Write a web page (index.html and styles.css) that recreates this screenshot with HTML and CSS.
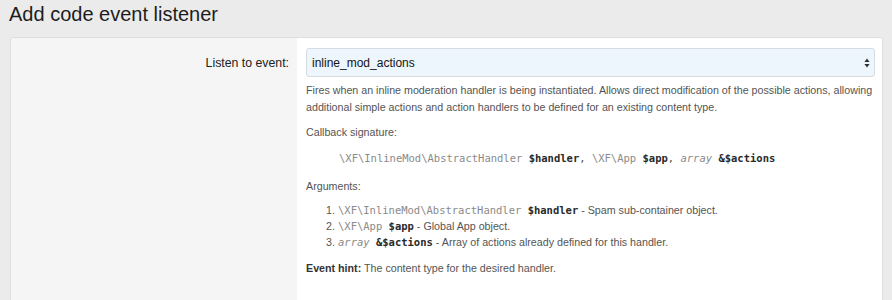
FILE: index.html
```html
<!DOCTYPE html>
<html lang="en">
<head>
<meta charset="UTF-8" />
<title>Add code event listener</title>
<link rel="stylesheet" href="styles.css">
</head>
<body>

<h1 class="page-title">Add code event listener</h1>

<div class="block">
    <div class="form-row">
        <dt class="row-label">Listen to event:</dt>
        <dd class="row-value">
            <div class="select-wrap">
                <select class="input">
                    <option>inline_mod_actions</option>
                </select>
                <svg class="select-arrow" width="6" height="10" viewBox="0 0 6 10">
                    <path d="M3 0.5 L5.6 4 L0.4 4 Z M3 9.5 L5.6 6 L0.4 6 Z" fill="#333"/>
                </svg>
            </div>

            <div class="explain">
                <p>Fires when an inline moderation handler is being instantiated. Allows direct modification of the possible actions, allowing additional simple actions and action handlers to be defined for an existing content type.</p>

                <p>Callback signature:</p>
                <p class="signature">
                    <span class="type">\XF\InlineMod\AbstractHandler</span> <span class="var">$handler</span>, <span class="type">\XF\App</span> <span class="var">$app</span>, <span class="type kw">array</span> <span class="var">&amp;$actions</span>
                </p>

                <p>Arguments:</p>
                <ol class="args">
                    <li><span class="code"><span class="type">\XF\InlineMod\AbstractHandler</span> <span class="var">$handler</span></span> - Spam sub-container object.</li>
                    <li><span class="code"><span class="type">\XF\App</span> <span class="var">$app</span></span> - Global App object.</li>
                    <li><span class="code"><span class="type kw">array</span> <span class="var">&amp;$actions</span></span> - Array of actions already defined for this handler.</li>
                </ol>

                <p><b>Event hint:</b> The content type for the desired handler.</p>
            </div>
        </dd>
    </div>
</div>

</body>
</html>
```

FILE: styles.css
```css
*{
    margin:0;
    padding:0;
    box-sizing:border-box;
}

body{
    font-family:'Liberation Sans',Arial,sans-serif;
    background:#ebebeb;
    color:#141414;
    height:300px;
    overflow:hidden;
}

.page-title{
    font-size:20px;
    font-weight:400;
    line-height:24px;
    padding:2px 9px 11px;
    color:#1d1d1d;
}

.block{
    margin:0 9px 0 10px;
    border:1px solid #dedede;
    border-radius:3px;
    overflow:hidden;
    height:280px;
}

.form-row{
    display:grid;
    grid-template-columns:286px 1fr;
    height:100%;
}

.row-label{
    background:#f5f5f5;
    text-align:right;
    font-size:12.3px;
    color:#222;
    padding:18px 8px 0 0;
}

.row-value{
    background:#fff;
    padding:10px 7px 20px 9px;
}

.select-wrap{
    position:relative;
}

.input{
    appearance:none;
    -webkit-appearance:none;
    width:100%;
    height:29px;
    border:1px solid #d6dbe1;
    border-radius:3px;
    background:#edf5fd;
    font-family:inherit;
    font-size:12px;
    color:#141414;
    padding:0 5px;
    outline:none;
}

.select-arrow{
    position:absolute;
    right:5px;
    top:10px;
}

.explain{
    font-size:10.7px;
    line-height:17px;
    color:#545454;
    padding-top:5px;
}

.explain p{
    margin-bottom:8px;
}

.signature{
    padding:1px 0 0 33px;
    margin-bottom:9px !important;
    height:20px;
}

.signature,
.code{
    font-family:'DejaVu Sans Mono',monospace;
    font-size:10.5px;
    color:#555;
}

.type{
    color:#8a8a8a;
}

.kw{
    font-style:italic;
}

.var{
    color:#2a2a2a;
    font-weight:600;
}

.args{
    padding-left:32px;
    margin-top:-1px;
    margin-bottom:10px;
    line-height:16px;
}

.explain b{
    color:#333;
}
```
